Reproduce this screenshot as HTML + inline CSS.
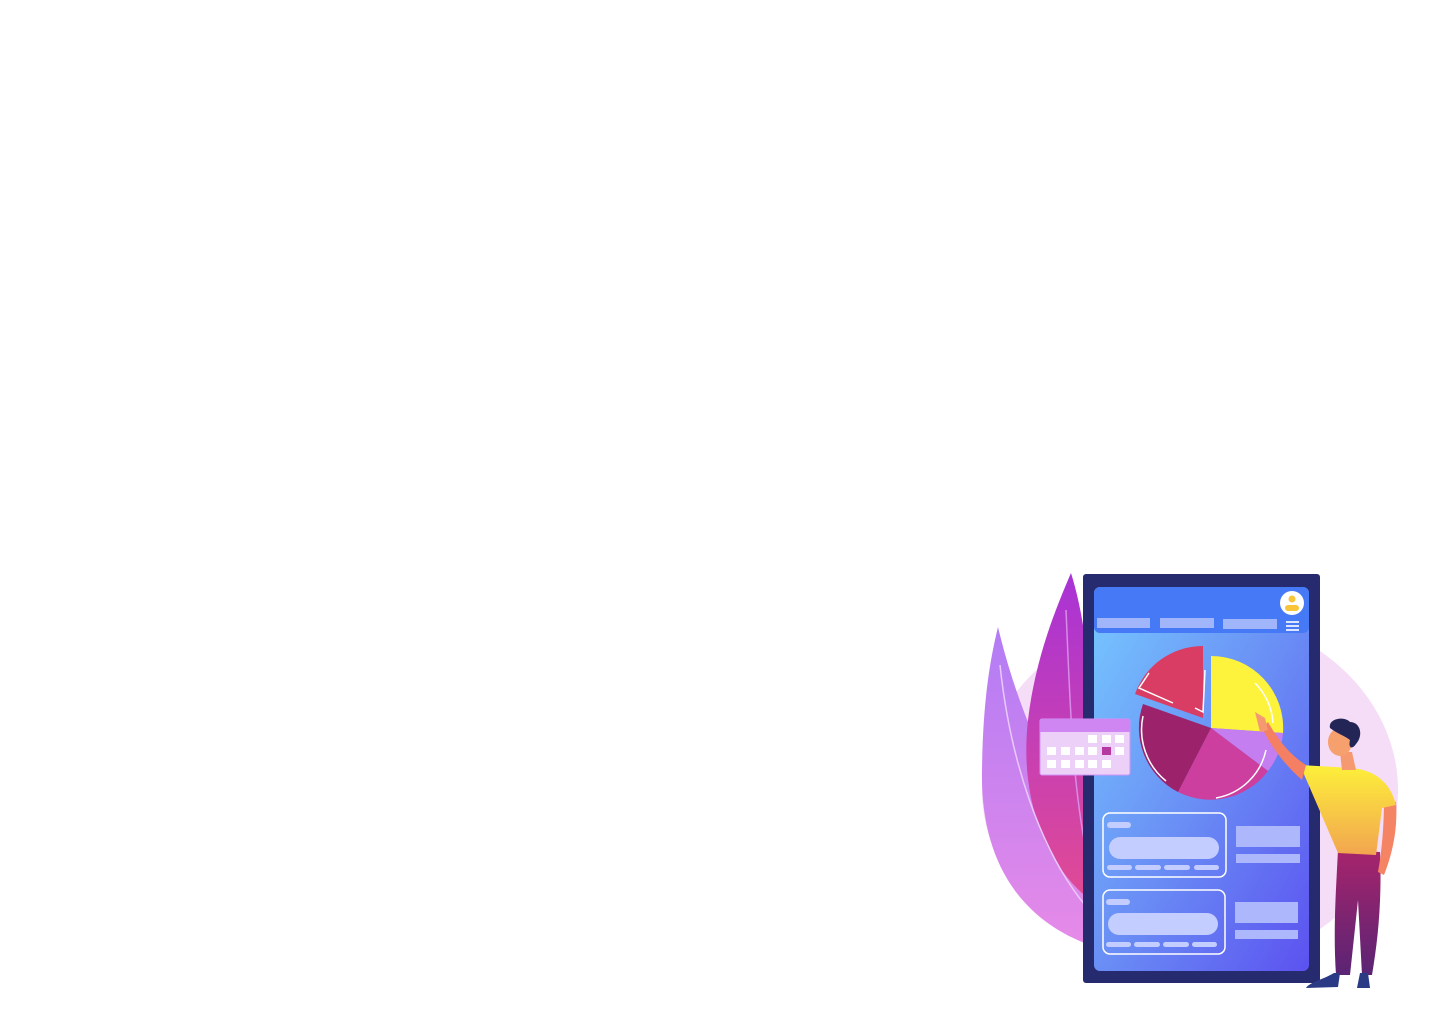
<!DOCTYPE html>
<html><head><meta charset="utf-8"><style>html,body{margin:0;padding:0;background:#fff;width:1440px;height:1024px;overflow:hidden}svg{position:absolute;left:0;top:0}</style></head>
<body>
<svg width="1440" height="1024" viewBox="0 0 1440 1024" xmlns="http://www.w3.org/2000/svg">
<defs>
<linearGradient id="leafA" x1="0" y1="0" x2="0" y2="1"><stop offset="0" stop-color="#b27cf5"/><stop offset="1" stop-color="#e68ae8"/></linearGradient>
<linearGradient id="leafB" x1="0" y1="0" x2="0" y2="1"><stop offset="0" stop-color="#a833d6"/><stop offset="1" stop-color="#e14a94"/></linearGradient>
<linearGradient id="scr" x1="0" y1="0" x2="1" y2="1"><stop offset="0" stop-color="#76c8ff"/><stop offset="0.5" stop-color="#6a8ff5"/><stop offset="1" stop-color="#5c52f0"/></linearGradient>
<linearGradient id="shirt" x1="0" y1="0" x2="0" y2="1"><stop offset="0" stop-color="#fdf03a"/><stop offset="1" stop-color="#f2a550"/></linearGradient>
<linearGradient id="pants" x1="0" y1="0" x2="0" y2="1"><stop offset="0" stop-color="#a7246c"/><stop offset="1" stop-color="#5a2474"/></linearGradient>
</defs>
<ellipse cx="1190" cy="790" rx="208" ry="178" fill="#f5dcf7"/>
<path d="M998 627 C1020 720 1060 800 1090 830 L1090 945 C1020 920 980 860 982 770 C983 700 990 660 998 627Z" fill="url(#leafA)"/>
<path d="M1071 573 C1095 650 1095 760 1090 900 C1040 860 1020 790 1028 720 C1035 660 1055 610 1071 573Z" fill="url(#leafB)"/>
<path d="M1000 665 C1010 760 1040 850 1085 905" stroke="#e9c9fb" stroke-width="1.5" fill="none"/>
<path d="M1066 610 C1070 700 1072 780 1086 850" stroke="#d88ce8" stroke-width="1.5" fill="none"/>
<rect x="1083" y="574" width="237" height="409" rx="3" fill="#262a6e"/>
<rect x="1094" y="587" width="215" height="384" rx="6" fill="url(#scr)"/>
<rect x="1094" y="587" width="215" height="46" rx="6" fill="#4679f5"/>
<rect x="1097" y="618" width="53" height="10" fill="#a1b5fb"/>
<rect x="1160" y="618" width="54" height="10" fill="#a1b5fb"/>
<rect x="1223" y="619" width="54" height="10" fill="#a1b5fb"/>
<rect x="1286" y="621" width="13" height="2" fill="#dde4ff"/><rect x="1286" y="625" width="13" height="2" fill="#dde4ff"/><rect x="1286" y="629" width="13" height="2" fill="#dde4ff"/>
<circle cx="1292" cy="603" r="12" fill="#fff"/><circle cx="1292" cy="599" r="3.5" fill="#f7c43a"/><rect x="1285" y="605" width="14" height="6" rx="3" fill="#f7c43a"/>
<g transform="translate(1211,728)">
<path d="M0 0 L0 -72 A72 72 0 0 1 72 5 Z" fill="#fdf33d"/>
<path d="M0 0 L72 5 A72 72 0 0 1 57 43 Z" fill="#c47ef0"/>
<path d="M0 0 L57 43 A72 72 0 0 1 -33 64 Z" fill="#cc3f9e"/>
<path d="M0 0 L-33 64 A72 72 0 0 1 -68 -24 Z" fill="#9c226b"/>
<path d="M-8 -10 L-76 -34 A72 72 0 0 1 -8 -82 Z" fill="#d93d63"/>
<path d="M44 -45 A62 62 0 0 1 62 -5" stroke="#fff" stroke-width="1.5" fill="none"/>
<path d="M55 22 A62 62 0 0 1 5 70" stroke="#fff" stroke-width="1.5" fill="none"/>
<path d="M-68 -12 A66 66 0 0 0 -45 53" stroke="#fff" stroke-width="1.5" fill="none"/>
<path d="M-62 -55 L-72 -40 L-38 -25 M-6 -58 L-8 -16 L-16 -20" stroke="#fff" stroke-width="1.5" fill="none"/>
</g>
<rect x="1040" y="719" width="90" height="56" rx="2" fill="#ecd0f8" stroke="#d193f5"/>
<rect x="1040" y="719" width="90" height="13" fill="#cf85f2"/>
<g fill="#fff">
<rect x="1088" y="735" width="9" height="8"/><rect x="1102" y="735" width="9" height="8"/><rect x="1115" y="735" width="9" height="8"/>
<rect x="1047" y="747" width="9" height="8"/><rect x="1061" y="747" width="9" height="8"/><rect x="1075" y="747" width="9" height="8"/><rect x="1088" y="747" width="9" height="8"/><rect x="1115" y="747" width="9" height="8"/>
<rect x="1047" y="760" width="9" height="8"/><rect x="1061" y="760" width="9" height="8"/><rect x="1075" y="760" width="9" height="8"/><rect x="1088" y="760" width="9" height="8"/><rect x="1102" y="760" width="9" height="8"/>
</g>
<rect x="1102" y="747" width="9" height="8" fill="#b43aa0"/>
<g fill="none" stroke="#fff" stroke-width="1.5"><rect x="1103" y="813" width="123" height="64" rx="7"/><rect x="1103" y="890" width="122" height="64" rx="7"/></g>
<g fill="#c3cdff">
<rect x="1107" y="822" width="24" height="6" rx="3"/><rect x="1109" y="837" width="110" height="22" rx="11"/>
<rect x="1107" y="865" width="25" height="5" rx="2.5"/><rect x="1135" y="865" width="26" height="5" rx="2.5"/><rect x="1164" y="865" width="26" height="5" rx="2.5"/><rect x="1194" y="865" width="25" height="5" rx="2.5"/>
<rect x="1106" y="899" width="24" height="6" rx="3"/><rect x="1108" y="913" width="110" height="22" rx="11"/>
<rect x="1106" y="942" width="25" height="5" rx="2.5"/><rect x="1134" y="942" width="26" height="5" rx="2.5"/><rect x="1163" y="942" width="26" height="5" rx="2.5"/><rect x="1192" y="942" width="25" height="5" rx="2.5"/>
</g>
<g fill="#adb7fb"><rect x="1236" y="826" width="64" height="21"/><rect x="1236" y="854" width="64" height="9"/><rect x="1235" y="902" width="63" height="21"/><rect x="1235" y="930" width="63" height="9"/></g>
<!-- person -->
<path d="M1338 850 L1380 852 C1382 900 1378 940 1372 975 L1362 975 L1358 900 L1350 975 L1336 975 C1333 930 1336 890 1338 850Z" fill="url(#pants)"/>
<path d="M1334 973 L1340 973 L1338 987 L1306 988 C1310 982 1322 980 1334 973Z" fill="#2b3a84"/>
<path d="M1360 973 L1368 973 L1370 988 L1357 988Z" fill="#2b3a84"/>
<path d="M1384 800 L1396 802 C1398 830 1392 855 1384 875 L1378 872 C1382 850 1384 825 1384 800Z" fill="#f48464"/>
<path d="M1300 765 L1352 768 C1372 770 1390 780 1396 805 L1382 808 L1376 855 L1338 853 Z" fill="url(#shirt)"/>
<path d="M1262 728 C1272 748 1285 765 1302 780 L1306 765 C1290 755 1278 740 1268 722Z" fill="#f47f62"/>
<path d="M1255 712 L1265 718 L1268 730 L1260 732Z" fill="#f59a70"/>
<path d="M1340 752 L1352 752 L1356 770 L1342 770Z" fill="#f59a70"/>
<ellipse cx="1340" cy="742" rx="12" ry="14" fill="#f6a06e"/>
<path d="M1330 728 C1328 718 1345 716 1350 722 C1360 722 1364 735 1356 744 C1352 750 1348 748 1350 740 C1345 736 1338 734 1330 728Z" fill="#232556"/>
</svg>
</body></html>
